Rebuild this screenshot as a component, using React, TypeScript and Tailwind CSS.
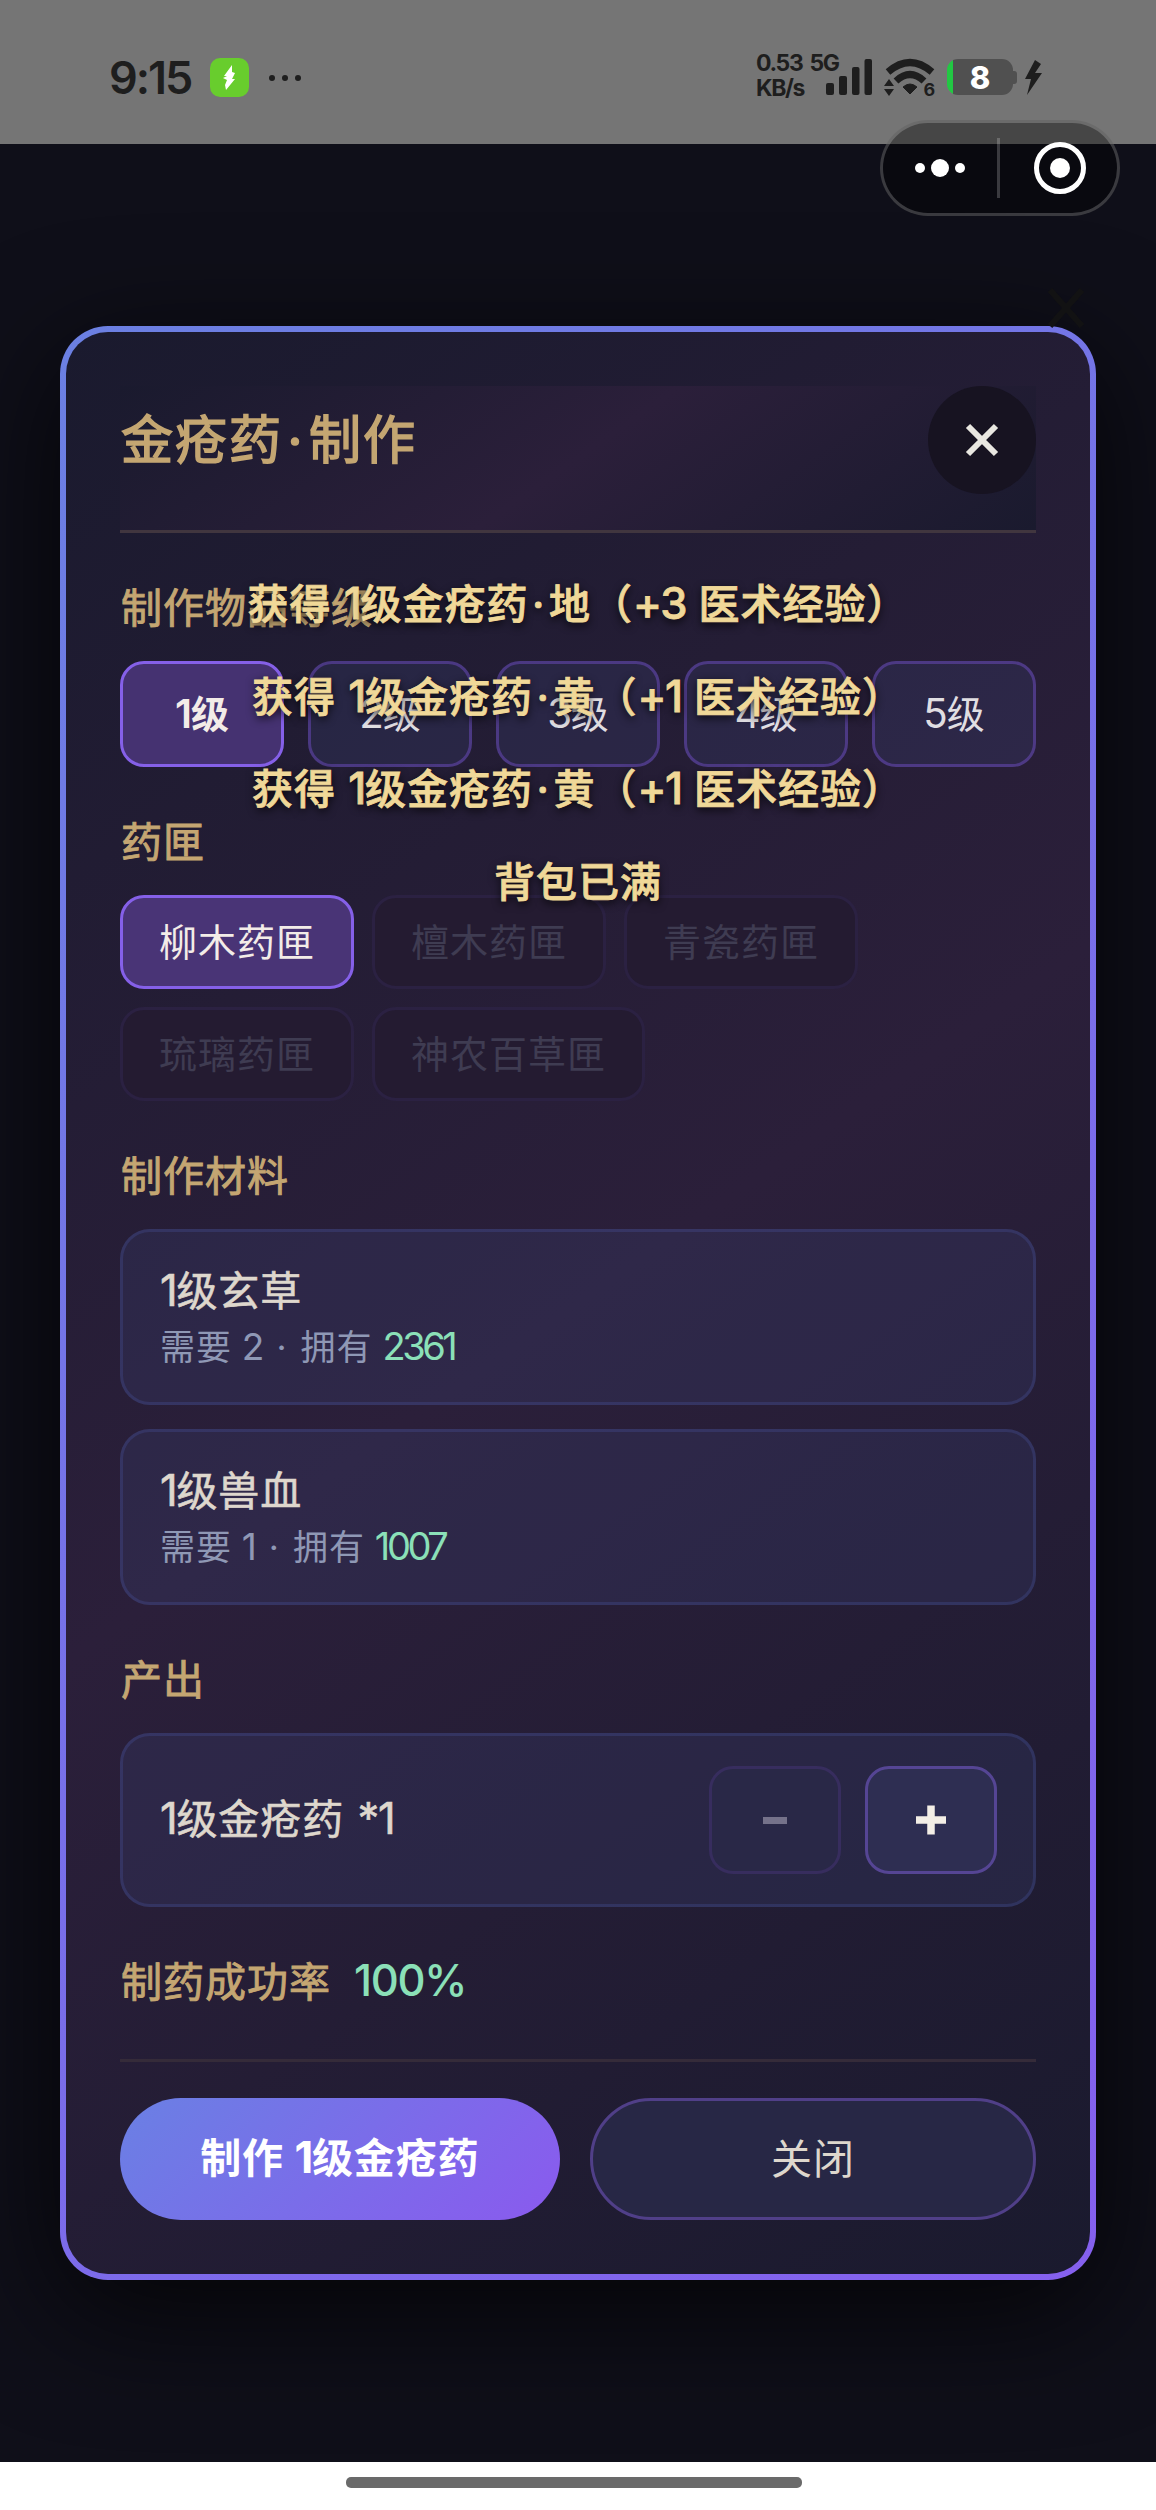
import React, { Fragment } from "react";

const NUMERAL = /([0-9%+*.]+|·)/;

/** Mixed Chinese / numeral text: numerals use a Latin face, the middle dot is half width. */
function Txt({ children }: { children: string }) {
  return (
    <>
      {children.split(NUMERAL).map((part, i) => {
        if (part === "·")
          return (
            <span key={i} className="inline-block w-[0.5em] text-center font-[Inter,sans-serif]">
              ·
            </span>
          );
        if (NUMERAL.test(part))
          return (
            <span key={i} className="font-[Inter,sans-serif] text-[1.06em] tracking-[-0.03em]">
              {part}
            </span>
          );
        return <Fragment key={i}>{part}</Fragment>;
      })}
    </>
  );
}

function SectionLabel({ children }: { children: string }) {
  return (
    <div className="mt-[43px] mb-[25px] flex h-[60px] items-center pl-[1px] text-[41px] tracking-[1px] text-[#c4a672] [-webkit-text-stroke:0.9px]">
      <span>{children}</span>
    </div>
  );
}

const BOLT = "M11 0 L1 19 H7 L3 35 L18 13 H11 L17 4 Z";

function StatusBar() {
  return (
    <div className="flex h-[144px] items-start justify-between bg-[#757575] pt-[54px] pr-[113px] pl-[109px] font-[Inter,sans-serif] text-[#1e1e1e]">
      <div className="flex h-[47px] items-center">
        <span className="w-[101px] text-[45px] leading-[47px] font-semibold tracking-[-0.045em]">9:15</span>
        <span className="flex size-[39px] items-center justify-center rounded-[10px] bg-[#68cd2d]">
          <svg width="13" height="25" viewBox="0 0 13 25" fill="#fff">
            <path d="M9 0 L1 11 H4 L0 13 L4 15 L2 20 L3 25 L12 14 H9 L12 8 L9 7 Z" />
          </svg>
        </span>
        <span className="ml-[20px] flex gap-[7px]">
          <i className="size-[6px] rounded-full bg-[#1e1e1e]" />
          <i className="size-[6px] rounded-full bg-[#1e1e1e]" />
          <i className="size-[6px] rounded-full bg-[#1e1e1e]" />
        </span>
      </div>
      <div className="flex h-[47px] items-start">
        <div className="-mt-[3px] w-[70px] text-[23px] leading-[25px] font-bold tracking-[-0.06em] whitespace-nowrap [word-spacing:3px]">
          <div>0.53 5G</div>
          <div>KB/s</div>
        </div>
        <svg width="48" height="47" viewBox="0 0 48 47" fill="#1e1e1e">
          <rect x="0" y="29" width="8" height="12" rx="2" />
          <rect x="13" y="22" width="8" height="19" rx="2" />
          <rect x="26" y="13" width="7.5" height="28" rx="2" />
          <rect x="38.500" y="5" width="7.500" height="36" rx="2" />
        </svg>
        <svg className="ml-[10px]" width="52" height="47" viewBox="0 0 52 47" fill="none" stroke="#1e1e1e">
          <path d="M4 18 Q26 -1 48 18" strokeWidth="7" />
          <path d="M12 27 Q26 14 40 27" strokeWidth="7" />
          <path d="M19 33 Q26 27 33 33 L26 40 Z" fill="#1e1e1e" strokeWidth="1" />
          <path d="M0 32 L5 25 L10 32 Z M0 35 L5 42 L10 35 Z" fill="#1e1e1e" stroke="none" />
          <text x="39.500" y="42" fontSize="18" fontWeight="700" fill="#1e1e1e" stroke="none">
            6
          </text>
        </svg>
        <div className="mt-[5px] ml-[11px] flex items-center">
          <div className="flex h-[36px] w-[66px] items-center justify-center overflow-hidden rounded-[11px] bg-[linear-gradient(90deg,#22c843_0_6px,#505050_6px)] text-[31px] leading-none font-extrabold text-white">
            8
          </div>
          <i className="h-[13px] w-[4px] rounded-r-[3px] bg-[#505050]" />
        </div>
        <svg className="mt-[6px] ml-[7px]" width="19" height="35" viewBox="0 0 19 35" fill="#1e1e1e">
          <path d={BOLT} />
        </svg>
      </div>
    </div>
  );
}

function Capsule() {
  return (
    <div className="absolute top-[120px] left-[880px] flex h-[96px] w-[240px] items-center rounded-full border-[3px] border-white/20 bg-black/40">
      <div className="flex w-[114px] items-center justify-center gap-[6px]">
        <i className="size-[10px] rounded-full bg-white" />
        <i className="size-[18px] rounded-full bg-white" />
        <i className="size-[10px] rounded-full bg-white" />
      </div>
      <i className="h-[60px] w-[3px] bg-white/20" />
      <div className="flex flex-1 justify-center pl-[3px]">
        <div className="flex size-[52px] items-center justify-center rounded-full border-[5px] border-white">
          <i className="size-[20px] rounded-full bg-white" />
        </div>
      </div>
    </div>
  );
}

function Levels() {
  return (
    <div className="grid grid-cols-5 gap-[24px]">
      {["1级", "2级", "3级", "4级", "5级"].map((t, i) => (
        <button
          key={t}
          className={
            "flex h-[106px] items-center justify-center rounded-[24px] border-[3px] pb-[1px] text-[38px] " +
            (i === 0
              ? "border-[#8560e8] bg-[#453271] font-semibold text-[#f3ece8]"
              : "border-[#8b5cf6]/35 bg-[#3c4276]/25 text-[#e0dee2]")
          }
        >
          <span>
            <Txt>{t}</Txt>
          </span>
        </button>
      ))}
    </div>
  );
}

function Boxes() {
  return (
    <div className="flex flex-wrap gap-[18px]">
      {["柳木药匣", "檀木药匣", "青瓷药匣", "琉璃药匣", "神农百草匣"].map((t, i) => (
        <button
          key={t}
          className={
            "h-[94px] rounded-[24px] border-[3px] px-[36px] pb-[4px] text-[38px] leading-[84px] tracking-[1px] " +
            (i === 0
              ? "border-[#8560e8] bg-[#493476] text-[#f3ece8]"
              : "border-[#2b2142] bg-[#241b31] text-[#3f3c52]")
          }
        >
          {t}
        </button>
      ))}
    </div>
  );
}

function Material({ name, need, own }: { name: string; need: string; own: string }) {
  return (
    <div className="h-[176px] rounded-[30px] border-[3px] border-[#667eea]/16 bg-[#3c4276]/25 px-[36px] pt-[27px]">
      <div className="h-[58px] pl-[1px] text-[41px] leading-[58px] tracking-[1px] text-[#ded7cd] [-webkit-text-stroke:0.6px]">
        <Txt>{name}</Txt>
      </div>
      <div className="h-[56px] pl-[1px] text-[35px] leading-[56px] tracking-[1px] text-[#8f98b5] [word-spacing:1px]">
        <Txt>{`需要 ${need} · 拥有 `}</Txt>
        <span className="font-[Inter,sans-serif] text-[38px] tracking-[-0.09em] text-[#8be0b8]">{own}</span>
      </div>
    </div>
  );
}

function Output() {
  return (
    <div className="flex h-[174px] items-center rounded-[30px] border-[3px] border-[#667eea]/16 bg-[#3c4276]/25 px-[36px]">
      <span className="-mt-[2px] flex-1 pl-[1px] text-[41px] tracking-[1px] text-[#ded7cd] [-webkit-text-stroke:0.6px] [word-spacing:3px]">
        <Txt>1级金疮药 *1</Txt>
      </span>
      <div className="flex gap-[24px]">
        <button className="flex h-[108px] w-[132px] items-center justify-center rounded-[24px] border-[3px] border-[#372d5e] bg-[#292847]">
          <i className="h-[7px] w-[24px] bg-[#75728a]" />
        </button>
        <button className="flex h-[108px] w-[132px] items-center justify-center rounded-[24px] border-[3px] border-[#554594] bg-[#2e2e52]">
          <svg width="30" height="30" viewBox="0 0 30 30" stroke="#f3eee6" strokeWidth="7.5">
            <path d="M15 0.500V29.500M0 15H30" />
          </svg>
        </button>
      </div>
    </div>
  );
}

function Dialog() {
  return (
    <div className="mx-[60px] mt-[182px] h-[1954px] rounded-[48px] bg-[linear-gradient(135deg,#6b80e2,#8560ee)] p-[6px] shadow-[0_30px_120px_rgba(0,0,0,0.75)]">
      <div className="flex h-full flex-col rounded-[42px] bg-[linear-gradient(145deg,#1a1a2e,#2b1f3a_50%,#1a1a2e)] p-[54px]">
        <div className="flex h-[147px] items-start justify-between border-b-[3px] border-[#41363f] bg-[linear-gradient(145deg,#1a1a2e,#2b1f3a_50%,#1a1a2e)]">
          <h1 className="pl-[1px] text-[52px] leading-[102px] tracking-[2px] text-[#c4a672] [-webkit-text-stroke:1.6px]">
            <Txt>金疮药·制作</Txt>
          </h1>
          <button className="flex size-[108px] items-center justify-center rounded-full bg-[#171321]">
            <svg width="34" height="34" viewBox="0 0 34 34" stroke="#e9e7e1" strokeWidth="6">
              <path d="M3 3L31 31M31 3L3 31" />
            </svg>
          </button>
        </div>
        <SectionLabel>制作物品等级</SectionLabel>
        <Levels />
        <SectionLabel>药匣</SectionLabel>
        <Boxes />
        <SectionLabel>制作材料</SectionLabel>
        <div className="flex flex-col gap-[24px]">
          <Material name="1级玄草" need="2" own="2361" />
          <Material name="1级兽血" need="1" own="1007" />
        </div>
        <SectionLabel>产出</SectionLabel>
        <Output />
        <div className="mt-[43px] mb-[49px] flex h-[60px] items-center gap-[23px] pl-[1px] text-[41px] tracking-[1px]">
          <span className="text-[#c4a672] [-webkit-text-stroke:0.9px]">制药成功率</span>
          <span className="pt-[2px] font-medium text-[#8be0b8]">
            <Txt>100%</Txt>
          </span>
        </div>
        <div className="flex gap-[30px] border-t-[3px] border-[#352b39] pt-[36px] text-[41px] tracking-[1px]">
          <button className="h-[122px] w-[440px] rounded-full bg-[linear-gradient(135deg,#6a80e4,#8a5aee)] pb-[3px] font-bold text-white">
            <Txt>制作 1级金疮药</Txt>
          </button>
          <button className="h-[122px] w-[446px] rounded-full border-[3px] border-[#503f88] bg-[#272745] pb-[5px] text-[#ded7cd]">
            关闭
          </button>
        </div>
      </div>
    </div>
  );
}

function Toasts() {
  const lines = [
    "获得 1级金疮药·地（+3 医术经验）",
    "获得 1级金疮药·黄（+1 医术经验）",
    "获得 1级金疮药·黄（+1 医术经验）",
    "背包已满",
  ];
  return (
    <div className="absolute inset-x-0 top-[555px] flex flex-col items-center text-[41px] font-medium tracking-[1px] text-[#f0d898] [-webkit-text-stroke:0.8px] [text-shadow:0_3px_9px_rgba(0,0,0,0.9)] [word-spacing:2px]">
      {lines.map((l, i) => (
        <div key={i} className="h-[92.500px] leading-[92.500px] whitespace-nowrap">
          <Txt>{l}</Txt>
        </div>
      ))}
    </div>
  );
}

/** Close mark of the page underneath, barely visible through the backdrop. */
function GhostClose() {
  return (
    <svg
      className="absolute top-[288px] left-[1048px]"
      width="36"
      height="40"
      viewBox="0 0 36 40"
      stroke="#121213"
      strokeWidth="6"
    >
      <path d="M2 2L34 38M34 2L2 38" />
    </svg>
  );
}

export default function App() {
  return (
    <div className="relative h-[2510px] w-[1156px] overflow-hidden bg-[#0f0f19] font-['Noto_Sans_CJK_SC',sans-serif]">
      <StatusBar />
      <Dialog />
      <div className="relative mt-[182px] flex h-[48px] justify-center bg-white pt-[15px]">
        <i className="mr-[8px] h-[11px] w-[456px] rounded-[5px] bg-[#6a6a6a]" />
      </div>
      <GhostClose />
      <Toasts />
      <Capsule />
    </div>
  );
}
